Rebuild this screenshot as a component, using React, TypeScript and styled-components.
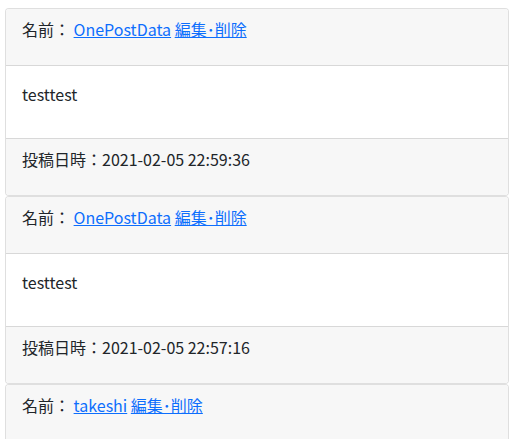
import React from "react";
import styled, { createGlobalStyle } from "styled-components";

const Global = createGlobalStyle`
  html, body { margin: 0; padding: 0; background: #fff; }
  body {
    font-family: "Segoe UI", "Noto Sans CJK JP", sans-serif;
    font-size: 16px;
    line-height: 1.5;
    color: #212529;
  }
`;

const List = styled.div`
  padding: 8px 11px 0 5px;
  display: flex;
  flex-direction: column;
`;

const Card = styled.div`
  display: flex;
  flex-direction: column;
  border: 1px solid rgba(0, 0, 0, 0.125);
  border-radius: 4px;
  background: #fff;
  overflow: hidden;
`;

const Section = styled.div<{ $tone: "head" | "body" | "foot" }>`
  padding: ${(p) => (p.$tone === "body" ? "16px" : "8px 16px")};
  background: ${(p) => (p.$tone === "body" ? "#fff" : "#f7f7f7")};
  border-top: ${(p) => (p.$tone === "foot" ? "1px solid rgba(0,0,0,0.125)" : "none")};
  border-bottom: ${(p) => (p.$tone === "head" ? "1px solid rgba(0,0,0,0.125)" : "none")};
`;

const Line = styled.p`
  margin: 0 0 16px;
`;

const Link = styled.a`
  color: #0d6efd;
  text-decoration: underline;
`;

const posts = [
  { name: "OnePostData", text: "testtest", date: "2021-02-05 22:59:36" },
  { name: "OnePostData", text: "testtest", date: "2021-02-05 22:57:16" },
  { name: "takeshi", text: "testtest", date: "2021-02-05 22:50:00" },
];

export default function App() {
  return (
    <>
      <Global />
      <List>
        {posts.map((p, i) => (
          <Card key={i}>
            <Section $tone="head">
              <Line>
                名前： <Link href="#">{p.name}</Link> <Link href="#">編集･削除</Link>
              </Line>
            </Section>
            <Section $tone="body">
              <Line>{p.text}</Line>
            </Section>
            <Section $tone="foot">
              <Line>投稿日時：{p.date}</Line>
            </Section>
          </Card>
        ))}
      </List>
    </>
  );
}
